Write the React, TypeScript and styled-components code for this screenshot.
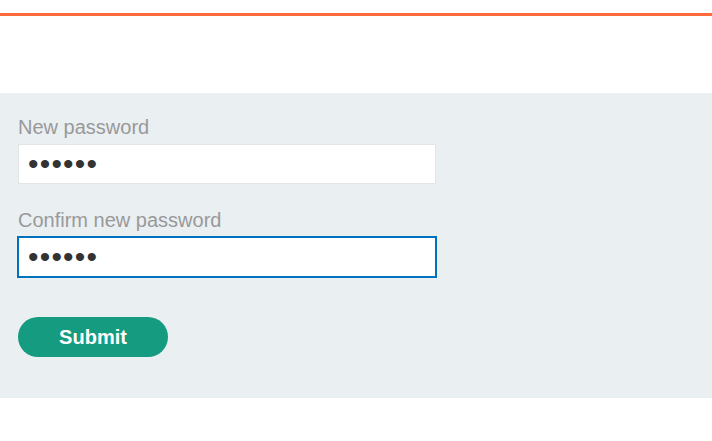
import React from "react";
import styled, { createGlobalStyle } from "styled-components";

const GlobalStyle = createGlobalStyle`
  body {
    margin: 0;
    background: #fff;
    font-family: "Liberation Sans", Arial, sans-serif;
  }
`;

const TopBar = styled.header`
  height: 13px;
  border-bottom: 3px solid #fe6b3c;
  margin-bottom: 77px;
`;

const FormSection = styled.section`
  background-color: #eaeff2;
  padding: 23px 18px 41px;
`;

const Form = styled.form`
  display: flex;
  flex-direction: column;
  align-items: flex-start;
`;

const Label = styled.label`
  display: block;
  font-size: 20px;
  line-height: 22px;
  color: #999;
  margin-bottom: 6px;
`;

const Field = styled.div`
  margin-bottom: 25px;
`;

const Input = styled.input<{ $focused?: boolean }>`
  box-sizing: border-box;
  width: 418px;
  height: 40px;
  padding: 0 9px;
  font-size: 30px;
  font-family: "Liberation Sans", Arial, sans-serif;
  color: #333;
  background: #fff;
  border: 1px solid ${p => (p.$focused ? "#0071bc" : "#e2e4e5")};
  outline: ${p => (p.$focused ? "1px solid #0071bc" : "none")};
  letter-spacing: 1.2px;
`;

const SubmitButton = styled.button`
  margin-top: 15px;
  width: 150px;
  height: 40px;
  border: none;
  border-radius: 20px;
  background-color: #159b80;
  color: #fff;
  font-family: "Liberation Sans", Arial, sans-serif;
  font-size: 20px;
  font-weight: bold;
  cursor: pointer;
`;

export default function App() {
  return (
    <>
      <GlobalStyle />
      <TopBar />
      <FormSection>
        <Form onSubmit={e => e.preventDefault()}>
          <Field>
            <Label htmlFor="new-password">New password</Label>
            <Input id="new-password" type="password" defaultValue="123456" />
          </Field>
          <Field>
            <Label htmlFor="confirm-password">Confirm new password</Label>
            <Input
              id="confirm-password"
              type="password"
              defaultValue="123456"
              $focused
            />
          </Field>
          <SubmitButton type="submit">Submit</SubmitButton>
        </Form>
      </FormSection>
    </>
  );
}
